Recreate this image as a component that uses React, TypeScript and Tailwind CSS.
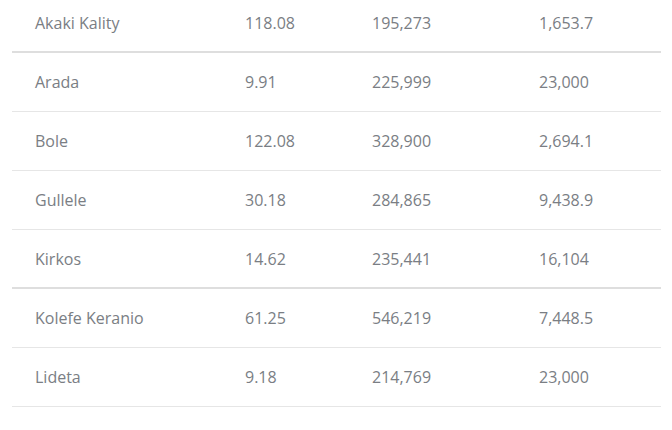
import React from "react";

const rows: { name: string; area: string; pop: string; dens: string; thick?: boolean }[] = [
  { name: "Akaki Kality", area: "118.08", pop: "195,273", dens: "1,653.7", thick: true },
  { name: "Arada", area: "9.91", pop: "225,999", dens: "23,000" },
  { name: "Bole", area: "122.08", pop: "328,900", dens: "2,694.1" },
  { name: "Gullele", area: "30.18", pop: "284,865", dens: "9,438.9" },
  { name: "Kirkos", area: "14.62", pop: "235,441", dens: "16,104", thick: true },
  { name: "Kolefe Keranio", area: "61.25", pop: "546,219", dens: "7,448.5" },
  { name: "Lideta", area: "9.18", pop: "214,769", dens: "23,000" },
  { name: "Nifas Silk-Lafto", area: "68.30", pop: "335,740", dens: "4,915.7" },
];

export default function App() {
  return (
    <div
      className="w-[672px] h-[430px] overflow-hidden bg-white"
      style={{ fontFamily: '"Open Sans", "Liberation Sans", sans-serif' }}
    >
      <div className="mx-[12px] w-[649px] -mt-[6px] text-[16px] text-[#7a7e84]">
        {rows.map((r) => (
          <div
            key={r.name}
            className={`flex items-center h-[59px] border-b ${
              r.thick ? "border-b-2 border-[#dedede]" : "border-[#e6e6e6]"
            }`}
          >
            <div className="w-[210px] pl-[23px]">{r.name}</div>
            <div className="w-[127px] pl-[23px]">{r.area}</div>
            <div className="w-[167px] pl-[23px]">{r.pop}</div>
            <div className="flex-1 pl-[23px]">{r.dens}</div>
          </div>
        ))}
      </div>
    </div>
  );
}
